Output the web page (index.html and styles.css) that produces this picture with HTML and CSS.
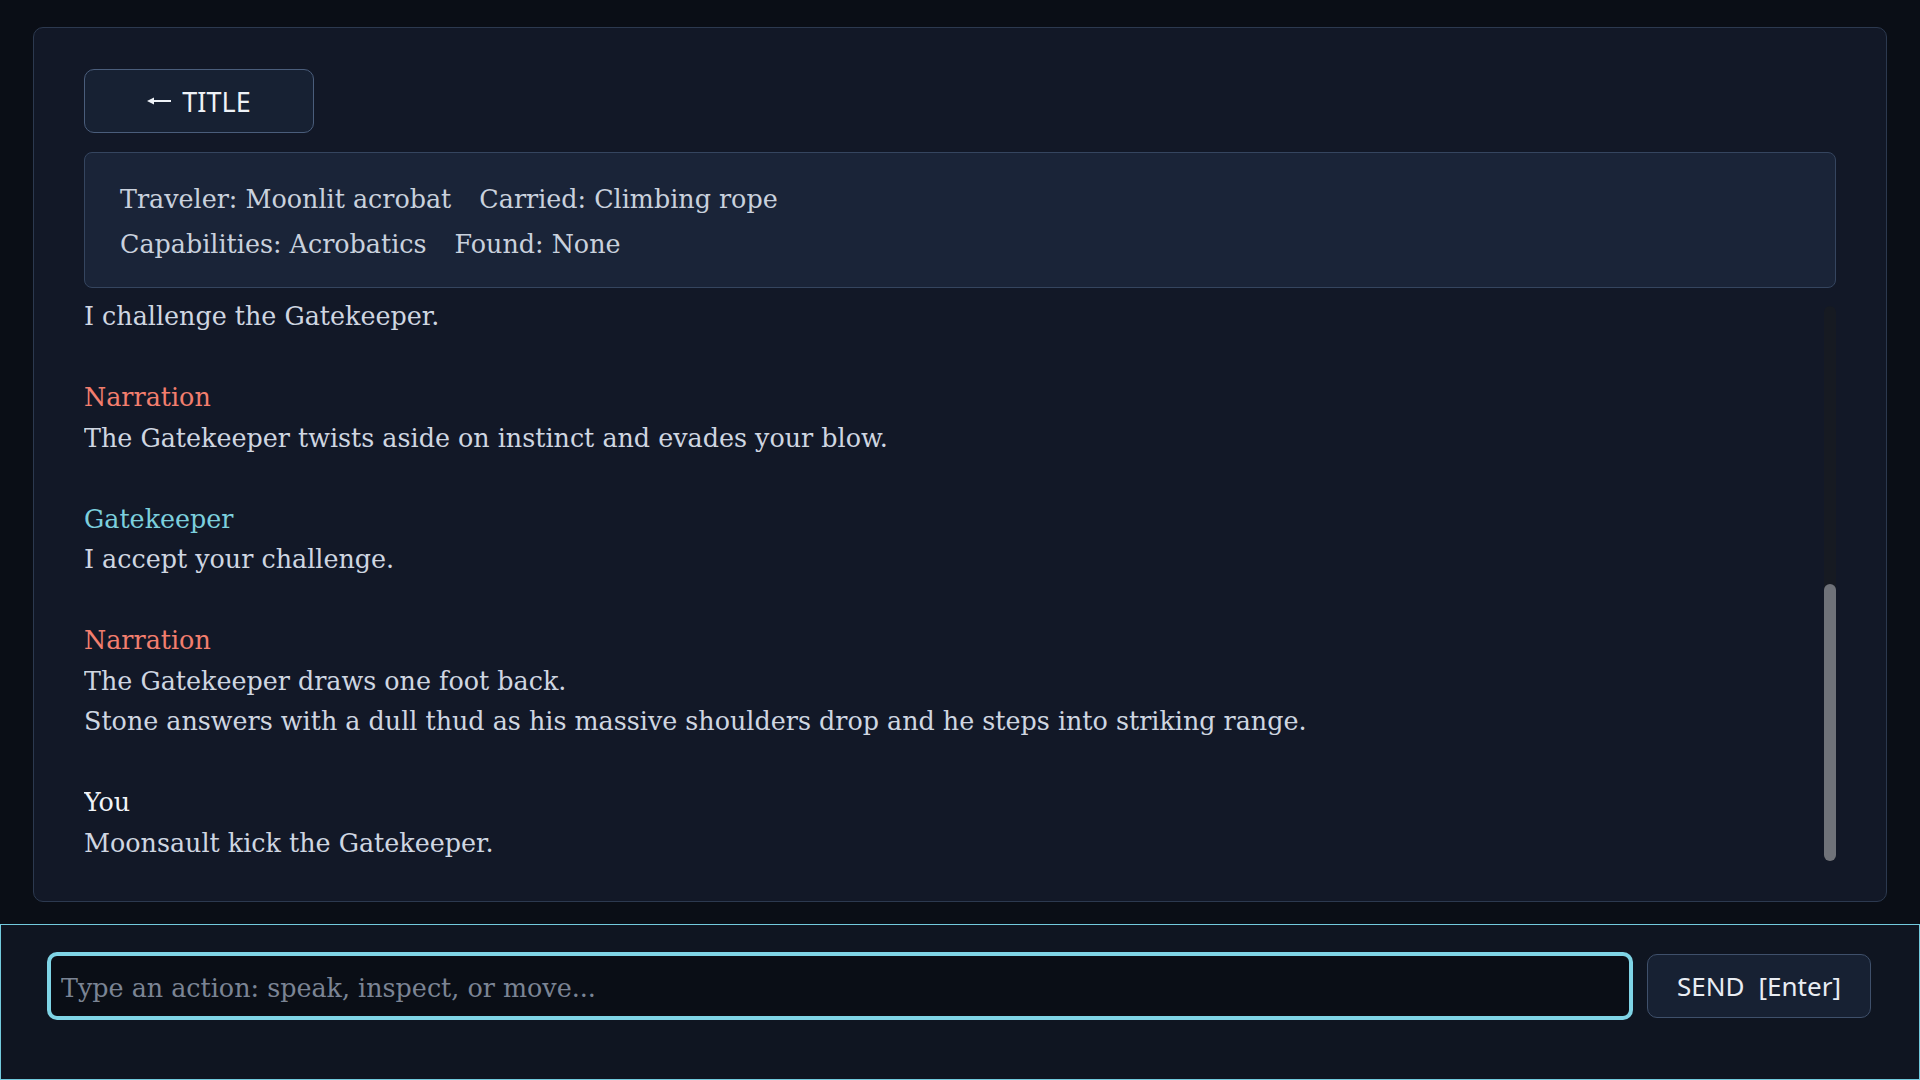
FILE: index.html
```html
<!DOCTYPE html>
<html lang="en">

<head>
    <meta charset="UTF-8">
    <meta name="viewport" content="width=device-width, initial-scale=1.0">
    <title>Gatekeeper</title>
    <link rel="stylesheet" href="styles.css">
</head>

<body>
    <div class="screen">
        <main class="panel">
            <button class="title-btn" type="button">
                <svg class="arrow" width="24" height="10" viewBox="0 0 24 10">
                    <path d="M0 5 L7 1.5 L7 8.5 Z" fill="currentColor"/>
                    <path d="M6 5 H24" stroke="currentColor" stroke-width="2"/>
                </svg>
                <span>TITLE</span>
            </button>

            <section class="status">
                <div class="status-row">
                    <span>Traveler: Moonlit acrobat</span>
                    <span>Carried: Climbing rope</span>
                </div>
                <div class="status-row">
                    <span>Capabilities: Acrobatics</span>
                    <span>Found: None</span>
                </div>
            </section>

            <div class="log-area">
                <div class="log" id="log">
                    <div class="msg">
                        <div>I challenge the Gatekeeper.</div>
                    </div>
                    <div class="msg">
                        <div class="speaker narration">Narration</div>
                        <div>The Gatekeeper twists aside on instinct and evades your blow.</div>
                    </div>
                    <div class="msg">
                        <div class="speaker npc">Gatekeeper</div>
                        <div>I accept your challenge.</div>
                    </div>
                    <div class="msg">
                        <div class="speaker narration">Narration</div>
                        <div>The Gatekeeper draws one foot back.</div>
                        <div>Stone answers with a dull thud as his massive shoulders drop and he steps into striking range.</div>
                    </div>
                    <div class="msg">
                        <div class="speaker you">You</div>
                        <div>Moonsault kick the Gatekeeper.</div>
                    </div>
                </div>
                <div class="scrollbar">
                    <div class="scroll-thumb" style="height: 50%;"></div>
                </div>
            </div>
        </main>

        <form class="composer" onsubmit="return false;">
            <input class="action-input" type="text" placeholder="Type an action: speak, inspect, or move..." autofocus>
            <button class="send-btn" type="submit"><span>SEND</span><span>[Enter]</span></button>
        </form>
    </div>
</body>

</html>
```

FILE: styles.css
```css
body {
    margin: 0;
    height: 100vh;
    overflow: hidden;
    background-color: #0a0e16;
    color: #cfd6e1;
    font-family: "DejaVu Serif", "Liberation Serif", serif;
    font-size: 25.4px;
}
.screen {
    display: flex;
    flex-direction: column;
    height: 100vh;
}
.panel {
    flex: 1;
    min-height: 0;
    margin: 27px 33px 22px;
    padding: 41px 50px 40px;
    display: flex;
    flex-direction: column;
    background-color: #121827;
    border: 1px solid #2c394f;
    border-radius: 10px;
}
.title-btn {
    display: inline-flex;
    align-items: center;
    justify-content: center;
    gap: 11px;
    width: 230px;
    height: 64px;
    flex-shrink: 0;
    margin-bottom: 19px;
    padding: 0;
    font-family: "Noto Sans", sans-serif;
    font-size: 27px;
    color: #eef2f7;
    background-color: #172133;
    border: 1px solid #4a5d7b;
    border-radius: 10px;
    cursor: pointer;
}
.status {
    flex-shrink: 0;
    margin-bottom: 8px;
    padding: 26px 35px 23px;
    display: flex;
    flex-direction: column;
    gap: 4px;
    line-height: 40.5px;
    color: #c9d1dd;
    background-color: #1a2438;
    border: 1px solid #35455f;
    border-radius: 8px;
}
.status-row {
    display: flex;
    gap: 28px;
}
.log-area {
    flex: 1;
    min-height: 0;
    display: flex;
}
.log {
    flex: 1;
    overflow: hidden;
    line-height: 40.5px;
}
.scrollbar {
    width: 12px;
    margin-top: 10px;
    display: flex;
    flex-direction: column;
    justify-content: flex-end;
    background-color: #161a22;
    border-radius: 6px;
}
.scroll-thumb {
    background-color: #6f7279;
    border-radius: 6px;
}
.msg + .msg {
    margin-top: 40.5px;
}
.speaker.narration {
    color: #f27e6e;
}
.speaker.npc {
    color: #7ccfdd;
}
.speaker.you {
    color: #f1f4f8;
}
.composer {
    flex-shrink: 0;
    box-sizing: border-box;
    height: 156px;
    margin: 0;
    padding: 29px 48px 0;
    display: flex;
    align-items: flex-start;
    gap: 16px;
    background-color: #0f1521;
    border: 1px solid #72cadd;
}
.action-input {
    flex: 1;
    box-sizing: border-box;
    height: 64px;
    padding: 3px 10px 0;
    font-family: "DejaVu Serif", "Liberation Serif", serif;
    font-size: 25.4px;
    color: #e3e8ef;
    background-color: #0a0e16;
    border: 2px solid #7fd4e6;
    border-radius: 8px;
    outline: none;
    box-shadow: 0 0 0 2px #7fd4e6;
}
.action-input::placeholder {
    color: #7b8494;
}
.send-btn {
    display: inline-flex;
    align-items: center;
    justify-content: center;
    gap: 14px;
    width: 224px;
    height: 64px;
    padding: 0;
    font-family: "Noto Sans", sans-serif;
    font-size: 26px;
    color: #e9edf3;
    background-color: #172133;
    border: 1px solid #3f506b;
    border-radius: 10px;
    cursor: pointer;
}
```
